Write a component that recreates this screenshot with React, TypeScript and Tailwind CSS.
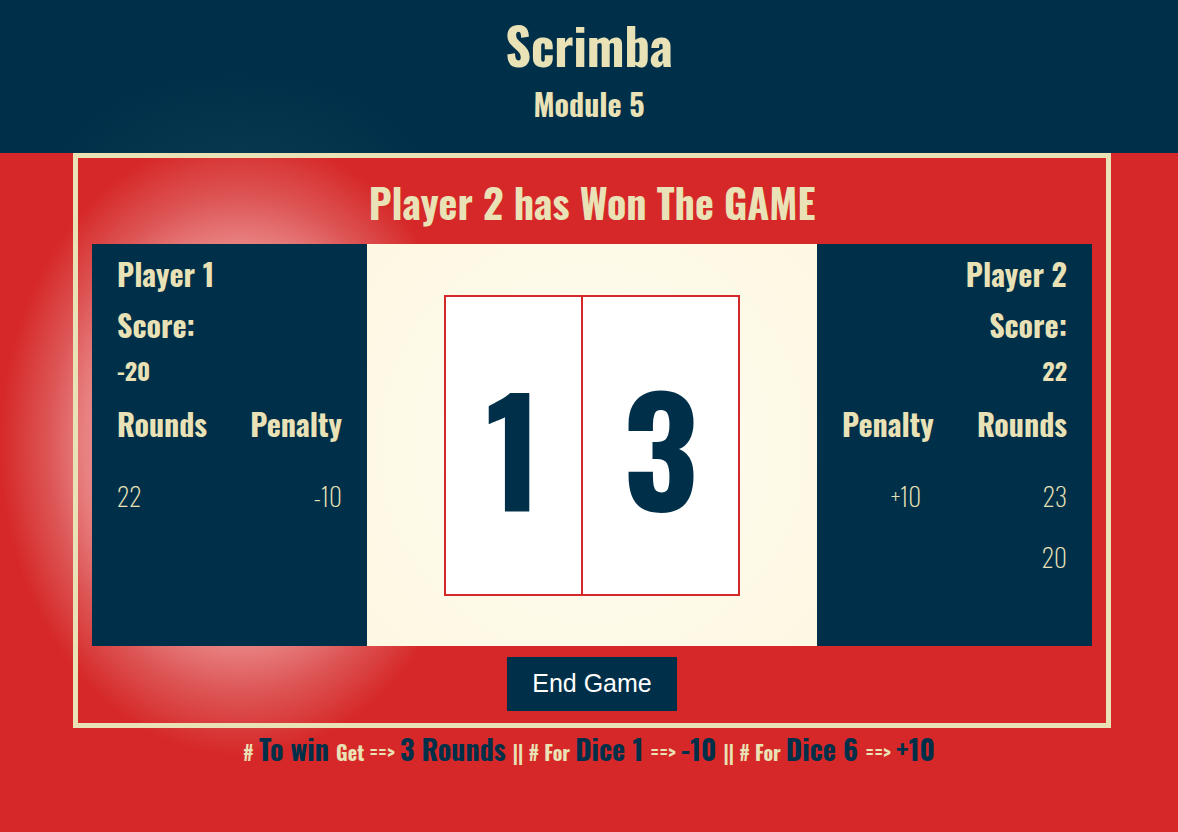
import React from "react";

const font = "font-['Oswald','DejaVu_Sans_Condensed','DejaVu_Sans',sans-serif]";

function Rounds({ side }: { side: "left" | "right" }) {
    if (side === "left") {
        return (
            <div className="mt-[18px] grid grid-cols-2">
                <p className="text-[30px] font-bold leading-[40px]">Rounds</p>
                <p className="text-right text-[30px] font-bold leading-[40px]">Penalty</p>
                <p className="mt-[36px] text-[25px] font-extralight leading-[32px]">22</p>
                <p className="mt-[36px] text-right text-[25px] font-extralight leading-[32px]">-10</p>
            </div>
        );
    }
    return (
        <div className="mt-[18px] grid grid-cols-2">
            <p className="text-left text-[30px] font-bold leading-[40px]">Penalty</p>
            <p className="text-right text-[30px] font-bold leading-[40px]">Rounds</p>
            <p className="mt-[36px] pl-[49px] text-left text-[25px] font-extralight leading-[32px]">+10</p>
            <p className="mt-[36px] text-right text-[25px] font-extralight leading-[32px]">23</p>
            <p className="mt-[29px] text-[25px] leading-[32px]"></p>
            <p className="mt-[29px] text-right text-[25px] font-extralight leading-[32px]">20</p>
        </div>
    );
}

function PlayerPanel({ n, score, side }: { n: number; score: number; side: "left" | "right" }) {
    const left = side === "left";
    return (
        <div className={`bg-[#003049] px-[25px] pt-[10px] text-[#eae2b7] ${left ? "text-left" : "text-right"}`}>
            <p className="text-[30px] font-bold leading-[40px]">Player {n}</p>
            <p className="mt-[11px] text-[30px] font-bold leading-[40px]">Score:</p>
            <p className="mt-[9px] text-[24px] font-bold leading-[32px]">{score}</p>
            <Rounds side={side} />
        </div>
    );
}

function Small({ children }: { children: React.ReactNode }) {
    return <span className="text-[20px] text-[#eae2b7]">{children}</span>;
}

function Big({ children }: { children: React.ReactNode }) {
    return <span className="text-[28px] text-[#003049]">{children}</span>;
}

export default function App() {
    return (
        <div className={`min-h-[832px] bg-[radial-gradient(ellipse_240px_310px_at_240px_445px,#f8dada_0%,#eea8a8_45%,#e88080_65%,#dd5555_80%,#d62828_100%)] ${font}`}>
            <header className="flex h-[153px] flex-col items-center bg-[radial-gradient(ellipse_200px_120px_at_240px_190px,#0a3a52_0%,#003049_100%)] pt-[11px] text-[#eae2b7]">
                <h1 className="text-[50px] font-bold leading-[66px]">Scrimba</h1>
                <h2 className="mt-[7px] text-[30px] font-bold leading-[40px]">Module 5</h2>
            </header>
            <main className="ml-[73px] flex h-[575px] w-[1038px] flex-col items-center border-[5px] border-[#eae2b7] px-[14px]">
                <h3 className="mt-[18px] text-[40px] font-bold leading-[52px] text-[#eae2b7]">Player 2 has Won The GAME</h3>
                <div className="mt-[16px] grid h-[402px] w-full grid-cols-[275px_1fr_275px]">
                    <PlayerPanel n={1} score={-20} side="left" />
                    <div className="flex items-center justify-center bg-[radial-gradient(circle_at_center,#fffdf2,#fdf8e2)]">
                        <div className="flex h-[301px] w-[296px] border-2 border-[#d62828] bg-white text-[#003049]">
                            <div className="flex w-[137px] items-center justify-center border-r-2 border-[#d62828] text-[146px] font-bold">1</div>
                            <div className="flex flex-1 items-center justify-center text-[146px] font-bold">3</div>
                        </div>
                    </div>
                    <PlayerPanel n={2} score={22} side="right" />
                </div>
                <button className="mt-[11px] h-[54px] w-[170px] bg-[#003049] font-['Liberation_Sans',Arial,sans-serif] text-[25px] text-white">
                    End Game
                </button>
            </main>
            <p className="text-center font-bold">
                <Small># </Small>
                <Big>To win </Big>
                <Small>Get ==&gt; </Small>
                <Big>3 Rounds </Big>
                <Small>|| # For </Small>
                <Big>Dice 1 </Big>
                <Small>==&gt; </Small>
                <Big>-10 </Big>
                <Small>|| # For </Small>
                <Big>Dice 6 </Big>
                <Small>==&gt; </Small>
                <Big>+10</Big>
            </p>
        </div>
    );
}
